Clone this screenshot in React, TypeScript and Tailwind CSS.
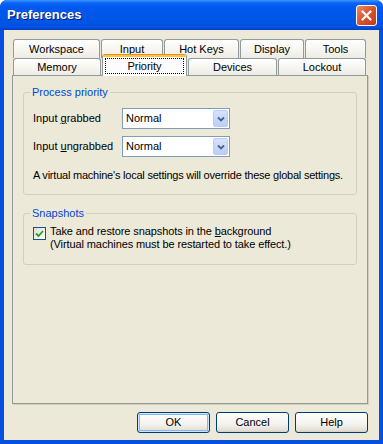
import { type ReactNode } from 'react'

const font = "font-['Liberation_Sans',Arial,sans-serif]"

function Tab({ label, w }: { label: string; w: string }) {
  return (
    <div
      className={`${w} h-full border border-b-0 border-[#919B9C] rounded-t-[3px] bg-[linear-gradient(to_bottom,#FFFFFF,#F3F2EC_70%,#ECEBE4)] flex items-center justify-center text-[11px] text-black`}
    >
      {label}
    </div>
  )
}

function SelectedTab({ label }: { label: string }) {
  return (
    <div className="relative z-10 w-[85px] h-[22px] self-end mb-[-1px] border-x border-[#919B9C] rounded-t-[3px] overflow-hidden flex flex-col bg-[#FCFCFE]">
      <div className="h-[1px] bg-[#E68B2C]" />
      <div className="h-[2px] bg-[#FFC73C]" />
      <div className="mx-[2px] mt-[1px] h-[16px] border border-dotted border-black flex items-center justify-center text-[11px] text-black">
        {label}
      </div>
    </div>
  )
}

function Combo({ value }: { value: string }) {
  return (
    <div className="w-[108px] h-[21px] border border-[#7F9DB9] bg-white flex items-center">
      <span className="flex-1 pl-[3px] text-[11px] text-black leading-none">{value}</span>
      <div className="w-[15px] h-[17px] mr-[1px] rounded-[2px] border border-[#BACDF6] bg-[linear-gradient(to_bottom,#D7E3FD,#B9CDF8)] flex items-center justify-center">
        <svg width="8" height="6" viewBox="0 0 8 6">
          <path d="M1 1.5 L4 4.5 L7 1.5" fill="none" stroke="#4D6185" strokeWidth="1.8" />
        </svg>
      </div>
    </div>
  )
}

function Group({ title, children, className = '' }: { title: string; children: ReactNode; className?: string }) {
  return (
    <fieldset className={`border border-[#D0D0BF] rounded-[3px] px-[9px] ${className}`}>
      <legend className="ml-[-3px] px-[2px] text-[11px] leading-[13px] text-[#0046D5]">{title}</legend>
      {children}
    </fieldset>
  )
}

function Button({ label, primary }: { label: string; primary?: boolean }) {
  return (
    <button
      className={`w-[73px] h-[21px] rounded-[3px] border border-[#003C74] bg-[linear-gradient(to_bottom,#FFFFFF,#F3F2EE_60%,#E3E0D6_90%,#D6D0C5)] text-[11px] text-black ${
        primary ? 'shadow-[inset_0_0_0_1px_#CEE7FF,inset_0_0_0_2px_#8CB2F0]' : ''
      }`}
    >
      {label}
    </button>
  )
}

export default function App() {
  return (
    <div className={`${font} w-[383px] h-[444px] rounded-t-[7px] overflow-hidden bg-[#0550E0] flex flex-col`}>
      {/* Title bar */}
      <div className="h-[30px] shrink-0 bg-[linear-gradient(to_bottom,#3D95FF_0px,#0A64F4_3px,#0058EE_8px,#0055E5_20px,#0452E2_27px,#003DC8_30px)] flex items-center pl-[7px] pr-[6px]">
        <span className="flex-1 text-[13px] font-bold text-white [text-shadow:1px_1px_0_#0A1883]">Preferences</span>
        <div className="w-[21px] h-[21px] rounded-[3px] border border-white bg-[linear-gradient(to_bottom_right,#E98B6A,#D9532F_50%,#C1391B)] flex items-center justify-center">
          <svg width="11" height="11" viewBox="0 0 11 11">
            <path d="M1.5 1.5 L9.5 9.5 M9.5 1.5 L1.5 9.5" stroke="white" strokeWidth="2.2" strokeLinecap="round" />
          </svg>
        </div>
      </div>

      {/* Body */}
      <div className="flex-1 mx-[4px] mb-[4px] bg-[#ECE9D8] pl-[8px] pr-[11px] pt-[9px] flex flex-col">
        {/* Tabs */}
        <div className="pl-[1px] flex flex-col">
          <div className="h-[19px] flex gap-[1px]">
            <Tab label="Workspace" w="w-[87px]" />
            <Tab label="Input" w="w-[62px]" />
            <Tab label="Hot Keys" w="w-[75px]" />
            <Tab label="Display" w="w-[64px]" />
            <Tab label="Tools" w="w-[61px]" />
          </div>
          <div className="h-[17px] flex items-end gap-[1px]">
            <Tab label="Memory" w="w-[88px]" />
            <SelectedTab label="Priority" />
            <Tab label="Devices" w="w-[89px]" />
            <Tab label="Lockout" w="w-[88px]" />
          </div>
        </div>

        {/* Panel */}
        <div className="h-[329px] border border-[#919B9C] shadow-[1px_1px_0_#D0CEBF] bg-[#ECE9D8] px-[10px] pt-[10px] text-[11px] text-black">
          <Group title="Process priority" className="pt-[9px] pb-[12px]">
            <div className="flex flex-col gap-[7px]">
              <div className="flex items-center">
                <span className="w-[89px]">
                  Input <u>g</u>rabbed
                </span>
                <Combo value="Normal" />
              </div>
              <div className="flex items-center">
                <span className="w-[89px]">
                  Input <u>u</u>ngrabbed
                </span>
                <Combo value="Normal" />
              </div>
            </div>
            <p className="mt-[12px] leading-[13px] whitespace-nowrap tracking-[-0.22px]">
              A virtual machine's local settings will override these global settings.
            </p>
          </Group>

          <Group title="Snapshots" className="mt-[12px] pt-[5px] pb-[13px]">
            <div className="flex items-start gap-[4px]">
              <div className="mt-[2px] w-[13px] h-[13px] shrink-0 border border-[#1C5180] bg-[linear-gradient(to_bottom_right,#DCDCD7,#FFFFFF)] flex items-center justify-center">
                <svg width="9" height="9" viewBox="0 0 9 9">
                  <path d="M1 4.5 L3.5 7 L8 2" fill="none" stroke="#21A121" strokeWidth="1.8" />
                </svg>
              </div>
              <div className="leading-[13px] tracking-[-0.1px]">
                <div>
                  Take and restore snapshots in the <u>b</u>ackground
                </div>
                <div>(Virtual machines must be restarted to take effect.)</div>
              </div>
            </div>
          </Group>
        </div>

        {/* Buttons */}
        <div className="mt-[8px] flex justify-end gap-[6px]">
          <Button label="OK" primary />
          <Button label="Cancel" />
          <Button label="Help" />
        </div>
      </div>
    </div>
  )
}
